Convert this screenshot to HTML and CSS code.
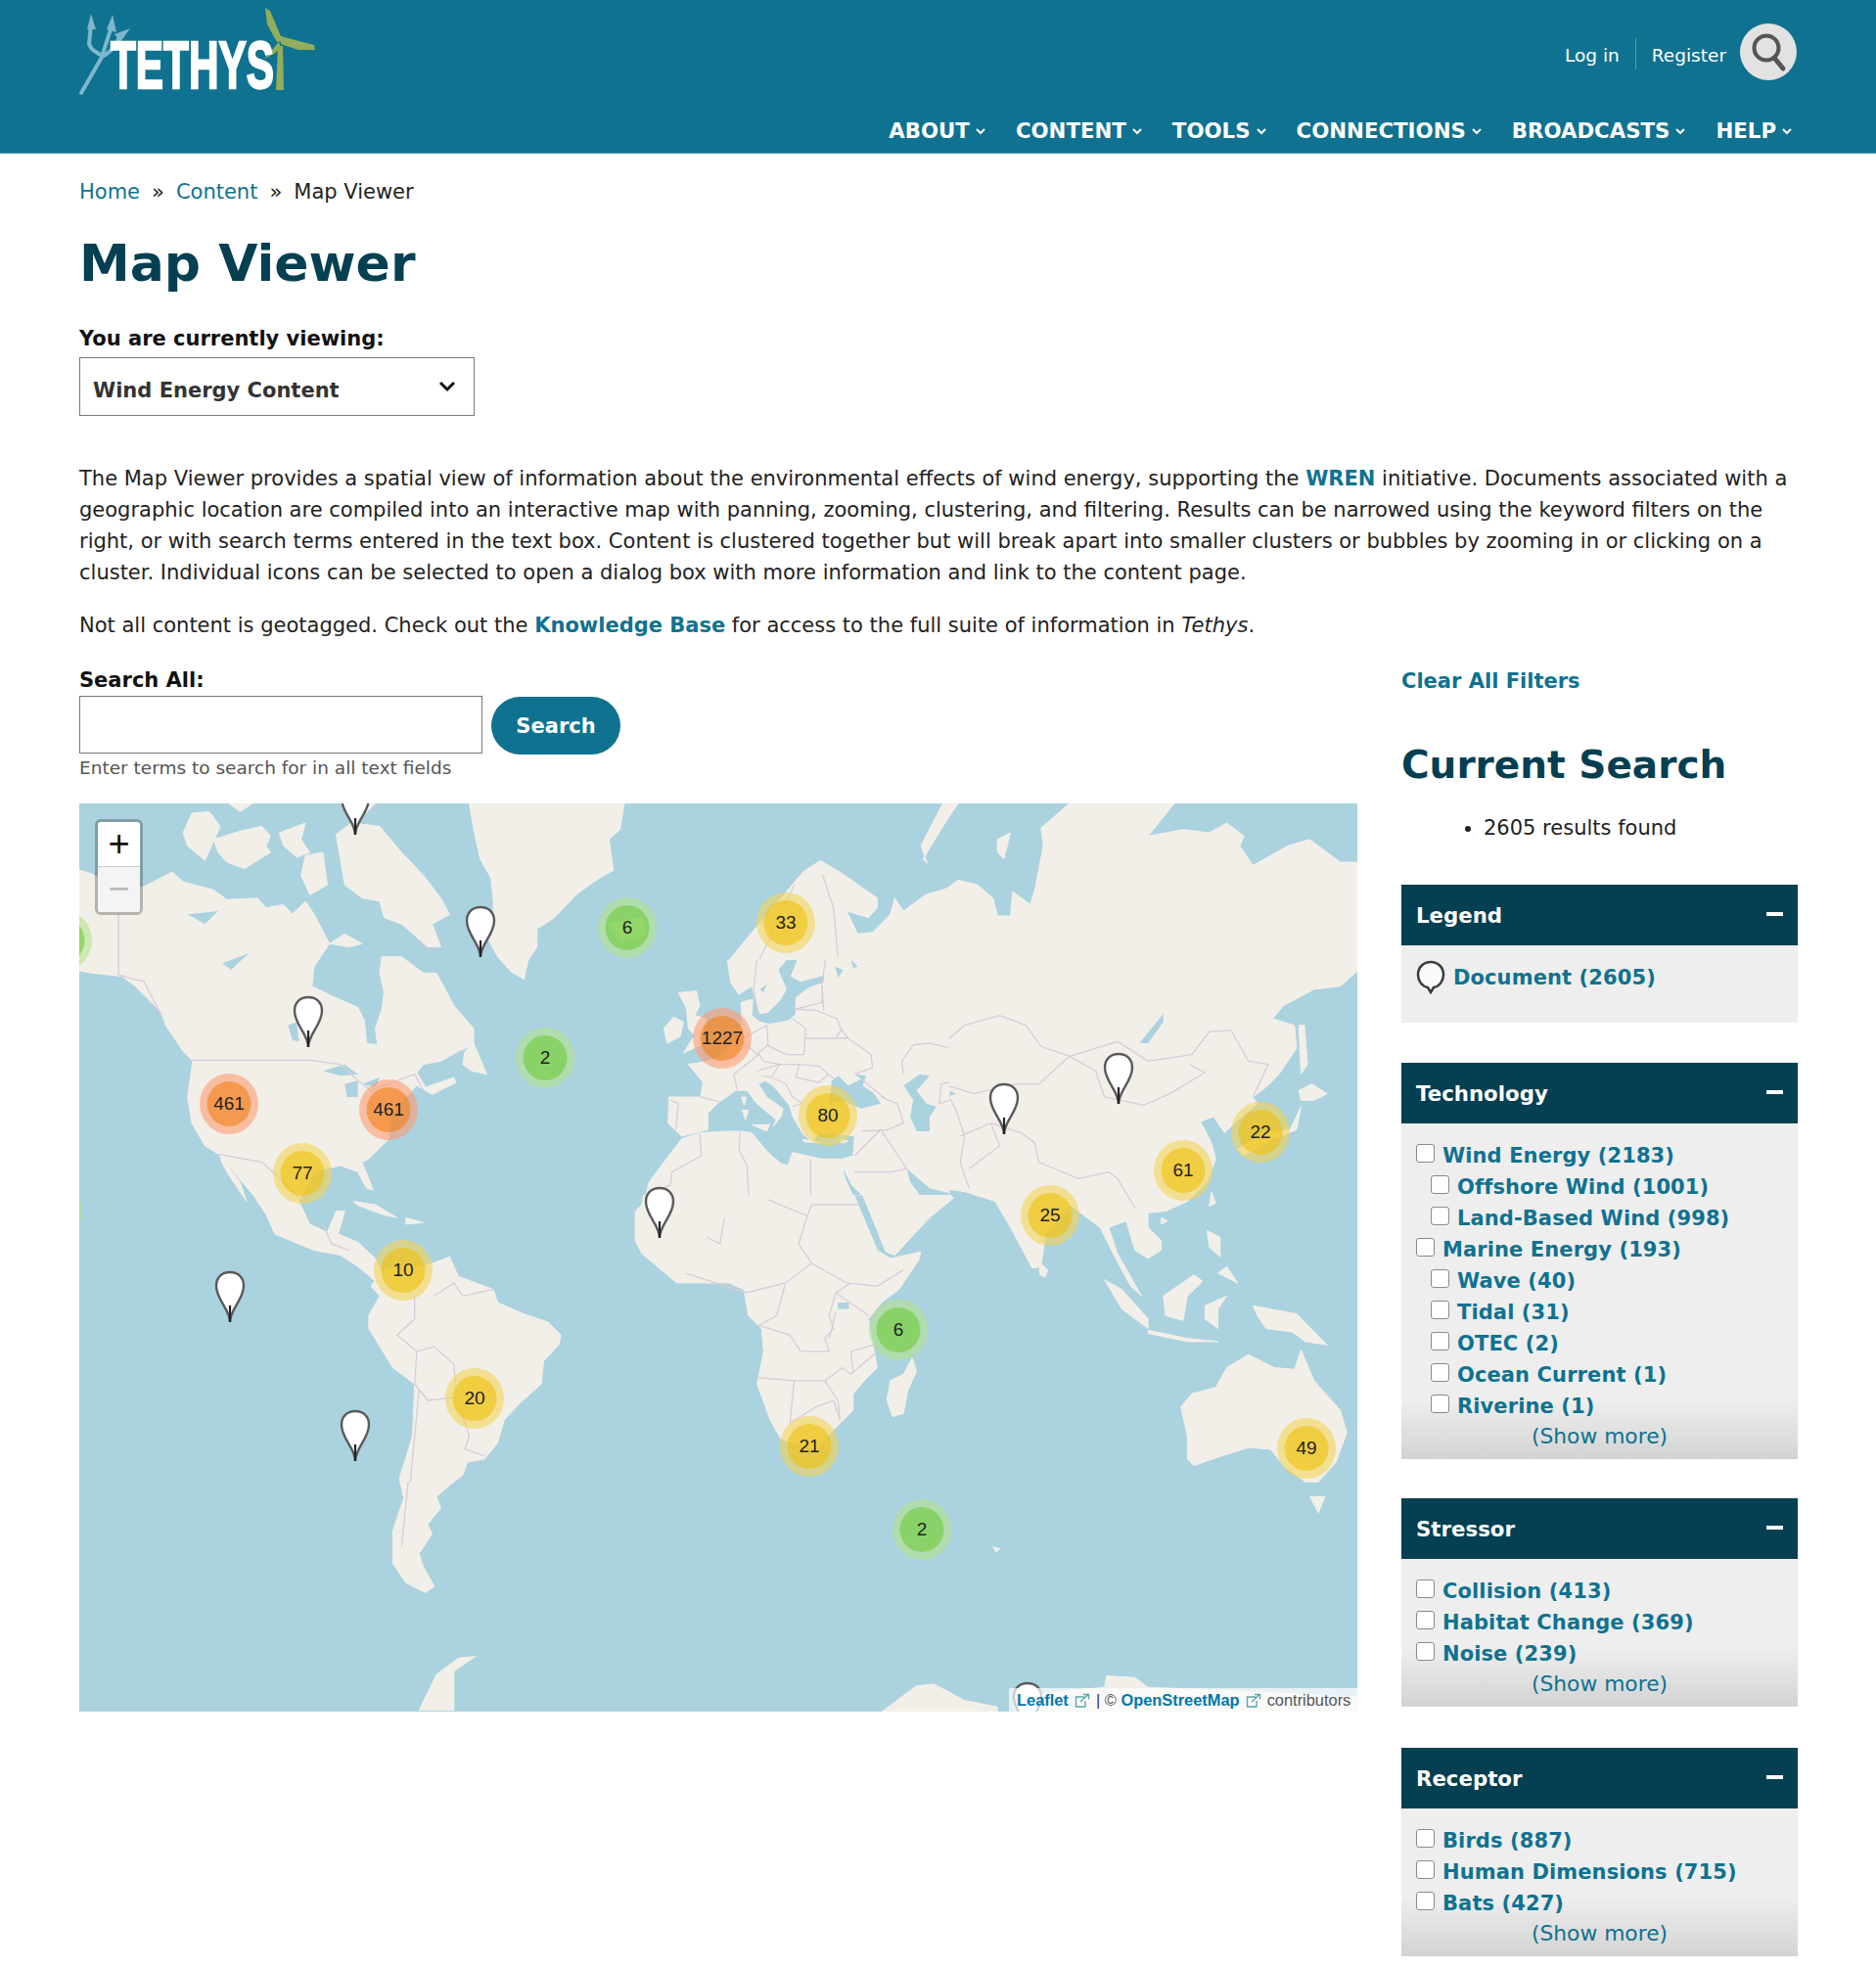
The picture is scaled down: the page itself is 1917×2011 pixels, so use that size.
FILE: index.html
```html
<!DOCTYPE html>
<html lang="en">
<head>
<meta charset="utf-8">
<title>Map Viewer | Tethys</title>
<link rel="stylesheet" href="styles.css">
</head>
<body>
<header class="site-header">
  <a class="logo" href="#">
    <svg class="logo-svg" width="245" height="95" viewBox="0 0 245 95">
      <path class="logo-trident-fill" d="M13 9L9 25 18 25Z M35 10L29 25 39 28Z M53 24L37 30 43 38Z"/>
      <path class="logo-trident" d="M3 90L26 50M13 20L11 40C13 46 20 50 26 52M34 22L25 50M42 33C38 44 32 48 26 52"/>
      <path class="logo-turbine" d="M191 3L196 6 209 37 203 38 193 20Z M207 32L241 41 242 46 225 46 207 40Z M190 55L205 38 207 44 200 50Z M204 42L209 42 210 87 202 87Z"/>
      <text class="logo-text" x="33" y="85" textLength="167" lengthAdjust="spacingAndGlyphs">TETHYS</text>
    </svg>
  </a>
  <div class="header-right">
    <div class="util">
      <a href="#" class="util-link">Log in</a>
      <span class="util-sep"></span>
      <a href="#" class="util-link">Register</a>
      <button class="search-round" aria-label="Search">
        <svg width="58" height="58" viewBox="0 0 58 58"><circle class="lens" cx="27" cy="25" r="12.5"/><path class="handle" d="M35 35 L44 46"/></svg>
      </button>
    </div>
    <nav class="main-nav">
      <a href="#">ABOUT<svg class="caret" width="10" height="7" viewBox="0 0 10 7"><path d="M1 1 L5 5 L9 1"/></svg></a>
      <a href="#">CONTENT<svg class="caret" width="10" height="7" viewBox="0 0 10 7"><path d="M1 1 L5 5 L9 1"/></svg></a>
      <a href="#">TOOLS<svg class="caret" width="10" height="7" viewBox="0 0 10 7"><path d="M1 1 L5 5 L9 1"/></svg></a>
      <a href="#">CONNECTIONS<svg class="caret" width="10" height="7" viewBox="0 0 10 7"><path d="M1 1 L5 5 L9 1"/></svg></a>
      <a href="#">BROADCASTS<svg class="caret" width="10" height="7" viewBox="0 0 10 7"><path d="M1 1 L5 5 L9 1"/></svg></a>
      <a href="#">HELP<svg class="caret" width="10" height="7" viewBox="0 0 10 7"><path d="M1 1 L5 5 L9 1"/></svg></a>
    </nav>
  </div>
</header>

<main class="page">
  <div class="crumbs"><a href="#">Home</a><span class="crumb-sep">»</span><a href="#">Content</a><span class="crumb-sep">»</span><span>Map Viewer</span></div>
  <h1 class="title">Map Viewer</h1>
  <label class="field-label">You are currently viewing:</label>
  <div class="select-wrap">
    <select class="viewing"><option>Wind Energy Content</option></select>
    <svg class="select-caret" width="18" height="12" viewBox="0 0 18 12"><path d="M2 2 L9 9 L16 2"/></svg>
  </div>
  <p class="intro first">The Map Viewer provides a spatial view of information about the environmental effects of wind energy, supporting the <a href="#"><b>WREN</b></a> initiative. Documents associated with a geographic location are compiled into an interactive map with panning, zooming, clustering, and filtering. Results can be narrowed using the keyword filters on the right, or with search terms entered in the text box. Content is clustered together but will break apart into smaller clusters or bubbles by zooming in or clicking on a cluster. Individual icons can be selected to open a dialog box with more information and link to the content page.</p>
  <p class="intro second">Not all content is geotagged. Check out the <a href="#"><b>Knowledge Base</b></a> for access to the full suite of information in <i>Tethys</i>.</p>

  <div class="columns">
    <section class="left">
      <label class="field-label">Search All:</label>
      <div class="search-row">
        <input class="search-input" type="text" aria-label="Search All">
        <button class="search-btn">Search</button>
      </div>
      <div class="help">Enter terms to search for in all text fields</div>

      <div class="map">
        <svg class="map-svg" width="1306" height="928" viewBox="0 0 1306 928">
          <defs>
            <symbol id="pin" viewBox="0 0 32 54" overflow="visible">
              <path class="pin-body" d="M16 53 C16 40 2 30 2 16 C2 7 8 2 16 2 C24 2 30 7 30 16 C30 30 16 40 16 53 Z"/>
              <path class="pin-tip" d="M16 36 L16 53"/>
            </symbol>
          </defs>
          <g transform="translate(-1 0) scale(.4464 .3333)">
            <path class="land" d="M-10 200L30 215 60 240 100 262 150 255 215 210 240 240 310 265 340 295 410 290 430 320 470 310 490 340 520 300 540 340 575 430 540 500 535 560 580 590 640 625 655 665 660 735 685 740 680 690 695 630 700 580 690 520 695 470 740 470 790 520 820 520 860 620 905 690 905 740 870 760 830 790 790 800 775 825 795 870 860 840 865 855 810 892 775 865 735 920 715 960 710 1030 665 1090 650 1100 675 1185 660 1180 640 1130 600 1110 540 1130 505 1220 530 1290 570 1315 590 1250 610 1250 595 1320 640 1345 680 1395 700 1450 680 1465 640 1420 600 1385 540 1370 450 1320 430 1260 400 1200 350 1120 320 1075 290 1050 260 980 250 900 262 790 240 760 200 680 190 640 130 560 100 530 30 520-10 510Z"/>
            <path class="land" d="M590 95L625 60 690 70 740 150 790 220 830 290 850 340 810 370 830 440 800 440 740 370 700 350 690 300 650 290 610 250 600 170Z"/>
            <path class="land" d="M600 0L680 0 650 40 620 30Z M345 0L400 0 370 25Z M240 90L260 30 300 25 325 70 290 175 250 130Z M310 110L370 85 420 70 440 100 430 130 440 150 380 200 340 180 320 150Z M460 90L520 60 510 110 530 150 500 165 470 130Z M520 160L560 150 570 250 530 280 510 220Z M575 430L610 400 650 430 620 440Z"/>
            <path class="land" d="M895 0L1250 0 1240 80 1215 110 1225 205 1180 240 1140 280 1090 350 1050 385 1050 440 1030 480 1020 540 990 515 960 470 940 420 950 360 950 300 945 230 920 170 905 80Z"/>
            <path class="land" d="M1215 370L1290 350 1300 400 1240 420Z M885 760L905 735 935 830 900 820 880 800Z M630 1220L680 1230 730 1270 700 1262 640 1232Z M750 1270L790 1285 750 1290Z M330 1090L370 1160 385 1220 365 1180 340 1130 325 1090Z"/>
            <path class="land" d="M690 1440L700 1430 745 1420 790 1420 850 1390 870 1450 950 1490 960 1530 1020 1565 1075 1590 1105 1630 1100 1660 1065 1710 1060 1780 1010 1840 975 1890 960 1960 930 2010 890 2020 880 2060 850 2090 820 2125 830 2160 800 2210 810 2240 780 2300 790 2340 815 2400 795 2420 750 2390 720 2330 720 2230 745 2130 735 2070 765 1940 770 1780 720 1730 665 1610 665 1570 690 1510 670 1480Z"/>
            <path class="land" d="M780 2780L820 2670 870 2620 910 2615 860 2660 860 2780Z"/>
            <path class="water" d="M250 340L320 330 290 370Z M330 490L390 460 350 510Z M480 680L500 670 505 730 490 725Z M560 820L610 800 640 830 600 835Z M610 860L640 850 640 900 615 900Z M650 860L690 840 680 870Z"/>
            <path class="border" d="M92 340L92 525 130 540 150 545 190 650M262 787L530 787 600 800 640 850 670 880 770 830 790 880M320 1075L420 1100 450 1135 505 1210M560 1290L580 1350 620 1370M770 1780L775 1680 815 1665 860 1720 865 1820 800 1830 770 1780M775 1680L730 1630 770 1580 770 1510M815 1510L860 1470 880 1510 950 1490M895 1940L885 1980 930 2000M760 2080L770 1940 780 1800M740 2280L755 2080M865 1820L890 1920 895 1940M1280 1240L1385 1240 1385 1320 1280 1330M1340 1160L1480 1270 1568 1220M1300 1345L1400 1390 1470 1340 1568 1350M1400 1390L1420 1450 1500 1470M1310 1400L1370 1440"/>
          </g>
          <g transform="translate(619 0) scale(.4464 .3333)">
            <path class="land" d="M-39 900L-10 895 20 885 42 860 35 820 5 800 30 790 60 770 100 735 125 690 135 640 130 600 120 590 95 490 150 400 220 290 270 210 310 175 360 215 440 290 440 320 420 350 370 330 395 400 430 395 470 340 480 290 500 330 550 280 600 260 625 235 670 250 705 290 715 345 745 345 750 270 790 310 800 270 820 130 815 75 880 0 1120 0 1060 100 1140 80 1200 90 1240 60 1280 100 1270 130 1300 190 1380 130 1430 110 1500 180 1538 180 1538 515 1500 560 1440 570 1370 620 1345 660 1395 680 1400 750 1360 830 1330 870 1300 900 1310 920 1250 990 1235 1010 1210 960 1180 975 1205 1040 1215 1090 1195 1160 1150 1220 1100 1250 1060 1255 1060 1300 1090 1340 1090 1370 1060 1395 1030 1370 1010 1280 970 1300 990 1380 1045 1510 1020 1480 980 1380 950 1300 900 1250 880 1230 825 1320 815 1420 795 1425 745 1300 710 1220 640 1190 590 1180 615 1210 560 1270 480 1385 460 1375 385 1130 385 1100 385 1010 330 1000 300 985 290 1040 265 1005 240 920 190 870 170 860 210 950 225 980 195 1000 130 900 105 880 70 900 60 905 90 915 55 960 10 1005 -20 1005 -39 980Z"/>
            <path class="land" d="M545 170L600 50 625 0 590 0 540 130 555 185Z M715 110L745 90 730 170 715 150Z M1405 680L1418 680 1425 800 1410 830Z M1405 880L1435 860 1470 890 1440 910 1410 910Z M1385 1000L1410 930 1400 1000 1330 1040 1280 1080 1265 1060 1330 1010Z M1205 1190L1215 1225 1200 1235Z M1090 1270L1105 1280 1090 1290Z M810 1405L830 1430 825 1452 812 1445Z M1195 1310L1225 1330 1225 1390 1200 1360Z M1240 1420L1265 1470 1220 1440Z"/>
            <path class="land" d="M-4 1025L31 1005 111 1005 130 1000 155 1050 240 1105 290 1075 360 1100 375 1130 365 1130 440 1370 470 1395 540 1375 535 1400 490 1490 450 1530 420 1580 430 1660 440 1730 410 1770 385 1810 385 1860 340 1920 300 1980 220 1950 195 1890 165 1780 180 1680 175 1610 145 1570 135 1490 100 1470 30 1470 -19 1470 -99 1380 -114 1340 -114 1250 -99 1230 -89 1150 -44 1090Z"/>
            <path class="land" d="M520 1700L530 1740 510 1800 500 1870 475 1880 462 1830 470 1770 500 1750Z"/>
            <path class="land" d="M1135 1850L1160 1810 1215 1790 1240 1730 1290 1690 1350 1730 1395 1735 1410 1675 1440 1770 1500 1860 1515 1930 1490 2020 1450 2080 1420 2080 1370 2030 1340 1980 1290 1975 1230 2000 1165 2030 1150 2010 1150 1940Z M1430 2125L1465 2125 1450 2175Z"/>
            <path class="land" d="M1300 1540L1400 1565 1470 1660 1420 1650 1390 1620 1330 1610 1310 1570Z M1095 1510L1165 1445 1185 1465 1150 1510 1140 1585 1100 1570Z M960 1460L1000 1490 1060 1580 1060 1610 1000 1550Z M1060 1615L1150 1640 1220 1650 1150 1650 1060 1625Z M1190 1540L1240 1510 1220 1550 1220 1610 1190 1580Z"/>
            <path class="land" d="M450 2785L530 2705 570 2700 640 2750 715 2770 715 2785Z M960 2710L965 2675 1030 2680 1060 2710 1250 2720 1540 2740 1540 2785 760 2785 800 2730Z M705 2280L722 2285 712 2295Z"/>
            <path class="water" d="M590 870L620 890 600 900Z M1040 735L1095 645 1095 670 1060 735Z M350 1530L375 1530 375 1550 350 1550Z"/>
            <path class="border" d="M435 790L495 770 520 735 580 750 640 680 720 650 780 680 815 745 880 775 990 730 1060 790 1160 770 1200 700 1250 695 1290 790 1335 800 1300 900M880 775L940 820 960 900 1050 925 1110 890 1190 825 1155 800M495 770L505 830 590 860 660 890 760 860 810 860 880 775M630 1020L700 980 770 1010 800 1040 810 1100 900 1150 970 1130 990 1150 1030 1240M590 860L620 940 640 1020 630 1100 650 1180M700 980L720 1050 650 1120M315 220L340 320 350 470M160 510L250 250M160 510L170 600M290 1230L400 1230M190 1215L280 1265 290 1230M280 1265L260 1350 290 1410M90 1270L80 1350 50 1330M0 1440L140 1500 230 1470 290 1410 370 1470 440 1480 500 1430M230 1470L210 1570 170 1600 240 1630 265 1680 330 1680 320 1640 340 1610 330 1570 345 1500 380 1470M345 1500L420 1570M165 1760L250 1770 320 1770 360 1730 380 1750 440 1680M250 1770L240 1900M320 1770L350 1830 355 1890 340 1830 300 1850 240 1900M430 1660L380 1680 385 1750M345 1560L330 1640"/>
          </g>
          <g transform="translate(559 160) scale(.3333)">
            <rect class="water" x="0" y="0" width="990" height="720"/>
            <path class="land" d="M310 0L320 70 345 105 385 80 395 120 410 165 435 160 470 125 490 90 465 30 490 0Z"/>
            <path class="land" d="M130 420L228 420 235 375 190 320 240 312 285 300 340 240 355 195 352 130 388 120 385 170 410 190 440 197 500 185 520 165 520 115 560 85 605 70 610 45 535 65 505 50 525 0 990 0 990 720 60 720 70 680 130 600 170 548 225 530 300 525 355 525 385 530 430 585 475 625 495 630 510 590 600 610 660 610 695 600 700 540 620 530 590 530 570 560 540 530 510 480 500 445 450 385 425 370 405 380 430 420 480 455 475 480 450 510 460 490 400 440 370 400 335 400 285 435 250 470 250 520 170 540 128 500 130 450Z"/>
            <path class="land" d="M160 100L215 95 225 140 210 170 245 180 230 260 175 285 210 230 190 210 185 150Z M115 210L145 175 175 190 165 235 125 255Z M385 505L440 505 430 525Z M355 460L375 460 365 490Z M352 420L368 420 362 445Z M540 550L600 560 545 558Z M655 550L680 555 660 562Z"/>
            <path class="water" d="M630 370L650 355 680 385 720 365 702 350 735 355 725 385 760 410 780 440 720 455 660 430 620 440Z M850 385L900 350 930 355 890 400 920 440 950 450 930 480 930 525 890 525 870 480 880 430Z M665 640L690 690 720 720 695 720 672 670Z M860 640L930 700 990 715 990 720 900 720 870 680Z M410 90L430 75 420 100Z M640 20L665 30 650 55Z M690 0L710 20 695 25Z"/>
            <path class="border" d="M228 420L285 435M135 430L160 440 152 520M340 240L405 290 330 350 340 400M350 245L430 200 435 260 405 285 420 310 470 320 400 340M430 260L490 290 545 290 550 210 510 180M545 240L640 240 680 240 750 290 755 330 700 350M520 150L585 155 645 180 660 215 640 240M520 150L600 130 600 75 605 155M470 320L530 320 590 325 620 350 640 365M530 320L520 360 590 375 620 350M445 360L490 380 510 420 540 440 510 450M420 355L445 360 470 320M780 420L830 440 850 500 800 520 720 525M700 600L780 520 860 640M845 310L880 260 930 255 990 270M845 310L850 350M720 365L800 430M225 530L230 600 140 650 135 690 60 720M350 525L345 580 370 630 375 720M565 610L565 720M700 650L810 650 860 640M600 75L610 0M400 0L390 90 405 165M660 215L680 240M990 430L960 440 965 380 990 375"/>
          </g>
          <use href="#pin" x="266" y="-21" width="32" height="54"/>
          <use href="#pin" x="394" y="104" width="32" height="54"/>
          <use href="#pin" x="218" y="196" width="32" height="54"/>
          <use href="#pin" x="577" y="391" width="32" height="54"/>
          <use href="#pin" x="929" y="285" width="32" height="54"/>
          <use href="#pin" x="1046" y="254" width="32" height="54"/>
          <use href="#pin" x="138" y="477" width="32" height="54"/>
          <use href="#pin" x="266" y="619" width="32" height="54"/>
          <use href="#pin" x="953" y="897" width="32" height="54"/>
          <g class="cluster green"><ellipse class="outer" cx="-17" cy="140" rx="30" ry="31"/><ellipse class="inner" cx="-17" cy="140" rx="22.5" ry="23"/></g>
          <g class="cluster green"><ellipse class="outer" cx="-27" cy="417" rx="30" ry="31"/><ellipse class="inner" cx="-27" cy="417" rx="22.5" ry="23"/></g>
          <g class="cluster green"><ellipse class="outer" cx="560" cy="127" rx="30" ry="31"/><ellipse class="inner" cx="560" cy="127" rx="22.5" ry="23"/><text x="560" y="133">6</text></g>
          <g class="cluster green"><ellipse class="outer" cx="476" cy="260" rx="30" ry="31"/><ellipse class="inner" cx="476" cy="260" rx="22.5" ry="23"/><text x="476" y="266">2</text></g>
          <g class="cluster orange"><ellipse class="outer" cx="153" cy="307" rx="30" ry="31"/><ellipse class="inner" cx="153" cy="307" rx="22.5" ry="23"/><text x="153" y="313">461</text></g>
          <g class="cluster orange"><ellipse class="outer" cx="316" cy="313" rx="30" ry="31"/><ellipse class="inner" cx="316" cy="313" rx="22.5" ry="23"/><text x="316" y="319">461</text></g>
          <g class="cluster yellow"><ellipse class="outer" cx="228" cy="378" rx="30" ry="31"/><ellipse class="inner" cx="228" cy="378" rx="22.5" ry="23"/><text x="228" y="384">77</text></g>
          <g class="cluster orange"><ellipse class="outer" cx="657" cy="240" rx="30" ry="31"/><ellipse class="inner" cx="657" cy="240" rx="22.5" ry="23"/><text x="657" y="246">1227</text></g>
          <g class="cluster yellow"><ellipse class="outer" cx="331" cy="477" rx="30" ry="31"/><ellipse class="inner" cx="331" cy="477" rx="22.5" ry="23"/><text x="331" y="483">10</text></g>
          <g class="cluster yellow"><ellipse class="outer" cx="722" cy="122" rx="30" ry="31"/><ellipse class="inner" cx="722" cy="122" rx="22.5" ry="23"/><text x="722" y="128">33</text></g>
          <g class="cluster yellow"><ellipse class="outer" cx="765" cy="319" rx="30" ry="31"/><ellipse class="inner" cx="765" cy="319" rx="22.5" ry="23"/><text x="765" y="325">80</text></g>
          <g class="cluster yellow"><ellipse class="outer" cx="992" cy="421" rx="30" ry="31"/><ellipse class="inner" cx="992" cy="421" rx="22.5" ry="23"/><text x="992" y="427">25</text></g>
          <g class="cluster yellow"><ellipse class="outer" cx="1128" cy="375" rx="30" ry="31"/><ellipse class="inner" cx="1128" cy="375" rx="22.5" ry="23"/><text x="1128" y="381">61</text></g>
          <g class="cluster yellow"><ellipse class="outer" cx="1207" cy="336" rx="30" ry="31"/><ellipse class="inner" cx="1207" cy="336" rx="22.5" ry="23"/><text x="1207" y="342">22</text></g>
          <g class="cluster yellow"><ellipse class="outer" cx="404" cy="608" rx="30" ry="31"/><ellipse class="inner" cx="404" cy="608" rx="22.5" ry="23"/><text x="404" y="614">20</text></g>
          <g class="cluster green"><ellipse class="outer" cx="837" cy="538" rx="30" ry="31"/><ellipse class="inner" cx="837" cy="538" rx="22.5" ry="23"/><text x="837" y="544">6</text></g>
          <g class="cluster yellow"><ellipse class="outer" cx="746" cy="657" rx="30" ry="31"/><ellipse class="inner" cx="746" cy="657" rx="22.5" ry="23"/><text x="746" y="663">21</text></g>
          <g class="cluster green"><ellipse class="outer" cx="861" cy="742" rx="30" ry="31"/><ellipse class="inner" cx="861" cy="742" rx="22.5" ry="23"/><text x="861" y="748">2</text></g>
          <g class="cluster yellow"><ellipse class="outer" cx="1254" cy="659" rx="30" ry="31"/><ellipse class="inner" cx="1254" cy="659" rx="22.5" ry="23"/><text x="1254" y="665">49</text></g>
        </svg>
        <div class="zoom-ctl">
          <a class="zoom-btn" href="#">+</a>
          <a class="zoom-btn disabled" href="#">−</a>
        </div>
        <div class="attribution">
          <a href="#">Leaflet</a>
          <svg class="ext" width="16" height="15" viewBox="0 0 16 15"><path d="M10 4H1.5V14H11V8M6 9L14 1.5M9 1.5H14.5V6.5"/></svg>
          <span class="attr-sep">|</span> © <a href="#">OpenStreetMap</a>
          <svg class="ext" width="16" height="15" viewBox="0 0 16 15"><path d="M10 4H1.5V14H11V8M6 9L14 1.5M9 1.5H14.5V6.5"/></svg>
          contributors
        </div>
      </div>
    </section>

    <aside class="side">
      <a class="clear" href="#">Clear All Filters</a>
      <h2 class="side-title">Current Search</h2>
      <ul class="results"><li>2605 results found</li></ul>

      <section class="panel legend">
        <div class="panel-head"><span>Legend</span><i class="minus"></i></div>
        <div class="panel-body legend-body">
          <svg class="legend-pin" width="30" height="35" viewBox="0 0 30 35"><path d="M15 33 L12 28 C6 27 2 21 2 15 C2 7 8 2 15 2 C22 2 28 7 28 15 C28 21 24 27 18 28 Z"/></svg>
          <a class="facet-link" href="#">Document (2605)</a>
        </div>
      </section>

      <section class="panel">
        <div class="panel-head"><span>Technology</span><i class="minus"></i></div>
        <div class="panel-body fade">
          <label class="facet"><input type="checkbox"><a class="facet-link" href="#">Wind Energy (2183)</a></label>
          <label class="facet sub"><input type="checkbox"><a class="facet-link" href="#">Offshore Wind (1001)</a></label>
          <label class="facet sub"><input type="checkbox"><a class="facet-link" href="#">Land-Based Wind (998)</a></label>
          <label class="facet"><input type="checkbox"><a class="facet-link" href="#">Marine Energy (193)</a></label>
          <label class="facet sub"><input type="checkbox"><a class="facet-link" href="#">Wave (40)</a></label>
          <label class="facet sub"><input type="checkbox"><a class="facet-link" href="#">Tidal (31)</a></label>
          <label class="facet sub"><input type="checkbox"><a class="facet-link" href="#">OTEC (2)</a></label>
          <label class="facet sub"><input type="checkbox"><a class="facet-link" href="#">Ocean Current (1)</a></label>
          <label class="facet sub"><input type="checkbox"><a class="facet-link" href="#">Riverine (1)</a></label>
          <a class="more" href="#">(Show more)</a>
        </div>
      </section>

      <section class="panel stressor">
        <div class="panel-head"><span>Stressor</span><i class="minus"></i></div>
        <div class="panel-body fade">
          <label class="facet"><input type="checkbox"><a class="facet-link" href="#">Collision (413)</a></label>
          <label class="facet"><input type="checkbox"><a class="facet-link" href="#">Habitat Change (369)</a></label>
          <label class="facet"><input type="checkbox"><a class="facet-link" href="#">Noise (239)</a></label>
          <a class="more" href="#">(Show more)</a>
        </div>
      </section>

      <section class="panel receptor">
        <div class="panel-head"><span>Receptor</span><i class="minus"></i></div>
        <div class="panel-body fade">
          <label class="facet"><input type="checkbox"><a class="facet-link" href="#">Birds (887)</a></label>
          <label class="facet"><input type="checkbox"><a class="facet-link" href="#">Human Dimensions (715)</a></label>
          <label class="facet"><input type="checkbox"><a class="facet-link" href="#">Bats (427)</a></label>
          <a class="more" href="#">(Show more)</a>
        </div>
      </section>
    </aside>
  </div>
</main>
</body>
</html>
```

FILE: styles.css
```css
* { box-sizing: border-box; }
html, body { margin: 0; padding: 0; }
body { font-family: "DejaVu Sans", Verdana, sans-serif; font-size: 21px; line-height: 32px; color: #222; background: #fff; }
a { color: #0f7290; text-decoration: none; }

.site-header { height: 157px; background: #0f7290; border-bottom: 1px solid #4b8fa6; padding: 0 81px 0 80px; display: flex; justify-content: space-between; align-items: flex-start; }
.logo { display: block; margin-top: 5px; }
.logo-svg { display: block; overflow: visible; }
.logo-trident { fill: none; stroke: #7db8cc; stroke-width: 4; stroke-linecap: round; }
.logo-trident-fill { fill: #7db8cc; }
.logo-turbine { fill: #93ad5b; }
.logo-text { font-family: "Liberation Sans", Arial, sans-serif; font-weight: 700; font-size: 69px; fill: #fff; stroke: #fff; stroke-width: 2.4; }
.header-right { display: flex; flex-direction: column; align-items: flex-end; }
.util { display: flex; align-items: center; height: 58px; margin-top: 24px; }
.util-link { color: #fff; font-size: 18.5px; padding-top: 7px; }
.util-sep { width: 1px; height: 32px; background: #5d9cb1; margin: 3px 16px 0 16px; }
.search-round { width: 58px; height: 58px; border: 0; border-radius: 50%; background: #e2e2e2; padding: 0; margin-left: 14px; }
.search-round svg { display: block; }
.lens { fill: none; stroke: #555; stroke-width: 4; }
.handle { fill: none; stroke: #555; stroke-width: 5; stroke-linecap: round; }
.main-nav { display: flex; gap: 31px; margin-top: 36px; padding-right: 5px; }
.main-nav a { color: #fff; font-weight: 700; font-size: 21.3px; display: flex; align-items: center; gap: 6px; }
.caret { fill: none; stroke: #fff; stroke-width: 2; }

.page { padding: 23px 81px 11px; }
.crumbs { display: flex; }
.crumb-sep { margin: 0 12px; }
.title { font-size: 52px; line-height: 62px; margin: 26px 0 30px; color: #043f52; font-weight: 700; }
.field-label { display: block; font-weight: 700; color: #111; }
.select-wrap { position: relative; width: 404px; height: 60px; margin-top: 3px; }
.viewing { appearance: none; width: 100%; height: 100%; border: 1px solid #77787a; border-radius: 0; background: #fff; font: 700 21px "DejaVu Sans", Verdana, sans-serif; color: #333; padding: 7px 13px 0; }
.select-caret { position: absolute; right: 19px; top: 24px; fill: none; stroke: #111; stroke-width: 3; }
.intro { margin: 0; }
.intro.first { margin-top: 48px; }
.intro.second { margin-top: 22px; }
.columns { display: flex; gap: 45px; margin-top: 24px; }
.left { width: 1306px; flex: none; }
.search-row { display: flex; gap: 9px; align-items: flex-start; }
.search-input { width: 412px; height: 59px; border: 1px solid #77787a; background: #fff; padding: 0 10px; font-size: 20px; }
.search-btn { width: 132px; height: 59px; margin-top: 1px; border: 0; border-radius: 30px; background: #0f7290; color: #fff; font: 700 21px "DejaVu Sans", Verdana, sans-serif; }
.help { font-size: 18.5px; line-height: 24px; margin-top: 2px; color: #555; }

.map { position: relative; width: 1306px; height: 928px; margin-top: 24px; background: #abd2df; overflow: hidden; }
.map-svg { display: block; }
.land { fill: #f2efe9; stroke: #f2efe9; stroke-width: 1; stroke-linejoin: round; vector-effect: non-scaling-stroke; }
.water { fill: #abd2df; }
.border { fill: none; stroke: #d9cbd8; stroke-width: 1.3; vector-effect: non-scaling-stroke; }
.pin-body { fill: #fff; stroke: #5a5a5a; stroke-width: 2.4; }
.pin-tip { fill: none; stroke: #222; stroke-width: 2.2; }
.cluster text { font: 19px "Liberation Sans", Arial, sans-serif; text-anchor: middle; fill: #222; }
.green .outer { fill: rgba(181, 226, 140, .6); }
.green .inner { fill: rgba(110, 204, 57, .6); }
.yellow .outer { fill: rgba(241, 211, 87, .6); }
.yellow .inner { fill: rgba(240, 194, 12, .6); }
.orange .outer { fill: rgba(253, 156, 115, .6); }
.orange .inner { fill: rgba(241, 128, 23, .6); }

.zoom-ctl { position: absolute; left: 16px; top: 16px; width: 49px; height: 98px; border: 3px solid rgba(0, 0, 0, .25); border-radius: 6px; background-clip: padding-box; overflow: hidden; }
.zoom-btn { display: block; height: 46px; background: #fff; color: #111; font: 400 38px/44px "Liberation Sans", Arial, sans-serif; text-align: center; border-bottom: 1px solid #ccc; }
.zoom-btn.disabled { background: #f4f4f4; color: #bbb; border-bottom: 0; }
.attribution { position: absolute; right: 0; bottom: 0; width: 356px; height: 24px; padding-left: 8px; background: rgba(255, 255, 255, .7); font: 16.4px/25px "Liberation Sans", Arial, sans-serif; color: #555; white-space: nowrap; }
.attribution a { color: #0078a8; font-weight: 700; }
.attr-sep { color: #333; }
.ext { fill: none; stroke: #5aa7ab; stroke-width: 1.4; vertical-align: -2px; margin: 0 1px 0 2px; }

.side { width: 405px; flex: none; padding-top: 1px; }
.clear { display: block; font-weight: 700; }
.side-title { font-size: 39px; line-height: 48px; margin: 46px 0 0; color: #043f52; font-weight: 700; }
.results { margin: 24px 0 0; padding: 0 0 0 84px; }
.panel { margin-top: 41px; background: #eee; }
.legend { margin-top: 42px; }
.stressor { margin-top: 40px; }
.receptor { margin-top: 42px; }
.panel-head { height: 62px; background: #043f52; color: #fff; font-weight: 700; font-size: 21.3px; display: flex; align-items: center; justify-content: space-between; padding: 0 15px; }
.panel-head span { margin-top: 2px; }
.minus { display: block; width: 17px; height: 4px; background: #fff; margin-top: -2px; }
.panel-body { padding: 16px 15px 7px; }
.legend-body { display: flex; align-items: center; gap: 8px; padding: 15px 15px 30px; height: 79px; }
.legend-pin { fill: #fafafa; stroke: #3c3c3c; stroke-width: 2.5; }
.fade { background: linear-gradient(to bottom, #eee, #eee calc(100% - 60px), #d3d3d3); }
.facet { display: flex; align-items: center; gap: 8px; height: 32px; }
.facet.sub { padding-left: 15px; }
.facet input { appearance: none; width: 19px; height: 19px; margin: -4px 0 0; background: #fff; border: 1px solid #8a8a8a; border-radius: 3px; flex: none; }
.facet-link { font-weight: 700; font-size: 21px; letter-spacing: .1px; margin-top: 2px; }
.more { display: block; text-align: center; height: 32px; font-size: 21.8px; }
```
